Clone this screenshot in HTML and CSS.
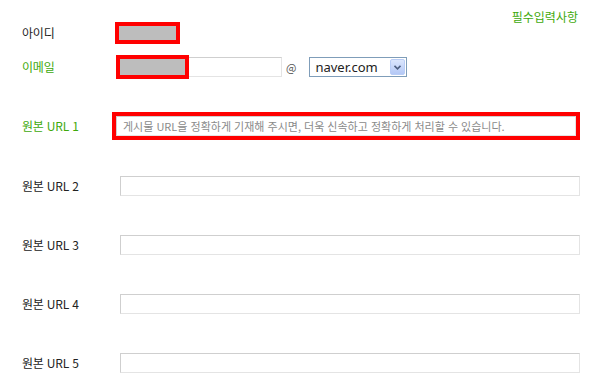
FILE: index.html
```html
<!DOCTYPE html>
<html lang="ko">
<head>
  <meta charset="UTF-8" />
  <title>원본 URL 입력</title>
  <link rel="stylesheet" href="styles.css">
</head>
<body>

<div class="form">
  <div class="note">필수입력사항</div>

  <div class="row row-id">
    <label class="label">아이디</label>
    <div class="mask mask-id"></div>
  </div>

  <div class="row row-email">
    <label class="label required">이메일</label>
    <div class="email-field">
      <input type="text" class="field field-email" />
      <div class="mask mask-email"></div>
    </div>
    <span class="at">@</span>
    <div class="domain">
      <select class="domain-select">
        <option>naver.com</option>
        <option>hanmail.net</option>
        <option>gmail.com</option>
      </select>
      <span class="domain-arrow">
        <svg width="7" height="5" viewBox="0 0 7 5"><path d="M0.5 0.8 L3.5 3.8 L6.5 0.8" fill="none" stroke="#4d5f80" stroke-width="1.6"/></svg>
      </span>
    </div>
  </div>

  <div class="row row-url1">
    <label class="label required">원본 URL 1</label>
    <div class="highlight">
      <input type="text" class="field field-url" placeholder="게시물 URL을 정확하게 기재해 주시면, 더욱 신속하고 정확하게 처리할 수 있습니다." />
    </div>
  </div>

  <div class="row row-url">
    <label class="label">원본 URL 2</label>
    <input type="text" class="field field-url" />
  </div>

  <div class="row row-url">
    <label class="label">원본 URL 3</label>
    <input type="text" class="field field-url" />
  </div>

  <div class="row row-url">
    <label class="label">원본 URL 4</label>
    <input type="text" class="field field-url" />
  </div>

  <div class="row row-url">
    <label class="label">원본 URL 5</label>
    <input type="text" class="field field-url" />
  </div>
</div>

</body>
</html>
```

FILE: styles.css
```css
body {
  margin: 0;
  padding: 0;
  background: #fff;
  font-family: "Noto Sans CJK KR", "Noto Sans", sans-serif;
  font-size: 12px;
  color: #222;
}

.form {
  width: 558px;
  padding: 0 13px 0 22px;
}

.note {
  height: 22px;
  padding-top: 9px;
  padding-right: 2px;
  box-sizing: border-box;
  line-height: 16px;
  text-align: right;
  color: #3ea90c;
}

.row {
  display: flex;
  align-items: center;
}

.label {
  width: 98px;
  flex-shrink: 0;
  line-height: 16px;
  letter-spacing: -0.2px;
}

.label.required {
  color: #3ea90c;
}

.row-id {
  height: 22px;
}

.row-email {
  height: 24px;
  margin-top: 11px;
}

.row-url1 {
  height: 28px;
  margin-top: 33px;
}

.row-url {
  height: 20px;
  margin-top: 36px;
}

.row-url + .row-url {
  margin-top: 39px;
}

.field {
  height: 20px;
  padding: 0 6px;
  box-sizing: border-box;
  border: 1px solid;
  border-color: #cfcfcf #e4e4e4 #e4e4e4 #cfcfcf;
  font-family: inherit;
  font-size: 11px;
  outline: none;
  background: #fff;
}

.field-url {
  width: 460px;
}

.field::placeholder {
  color: #8a8a8a;
}

.mask {
  background: #bdbdbd;
  border: 4px solid #ff0000;
  box-sizing: border-box;
}

.mask-id {
  width: 65px;
  height: 22px;
  margin-left: -5px;
}

.email-field {
  position: relative;
}

.field-email {
  width: 162px;
  display: block;
}

.mask-email {
  position: absolute;
  left: -4px;
  top: -2px;
  width: 73px;
  height: 24px;
}

.at {
  margin: 0 13px 0 4px;
  color: #555;
  font-size: 11px;
}

.domain {
  position: relative;
  width: 98px;
  height: 20px;
}

.domain-select {
  appearance: none;
  -webkit-appearance: none;
  width: 98px;
  height: 20px;
  border: 1px solid #7f9db9;
  border-radius: 0;
  background: #fff;
  padding: 0 0 0 5px;
  font-family: "Noto Sans", sans-serif;
  font-size: 13px;
  color: #222;
  outline: none;
}

.domain-arrow {
  position: absolute;
  right: 2px;
  top: 2px;
  width: 15px;
  height: 16px;
  box-sizing: border-box;
  border: 1px solid #b9cdf6;
  border-radius: 2px;
  background: linear-gradient(#dbe6fd, #b4c8f6);
  display: flex;
  align-items: center;
  justify-content: center;
  pointer-events: none;
}

.highlight {
  width: 469px;
  height: 28px;
  margin-left: -8px;
  border: 4px solid #ff0000;
  box-sizing: border-box;
  display: flex;
}

.highlight .field-url {
  width: 100%;
}
```
